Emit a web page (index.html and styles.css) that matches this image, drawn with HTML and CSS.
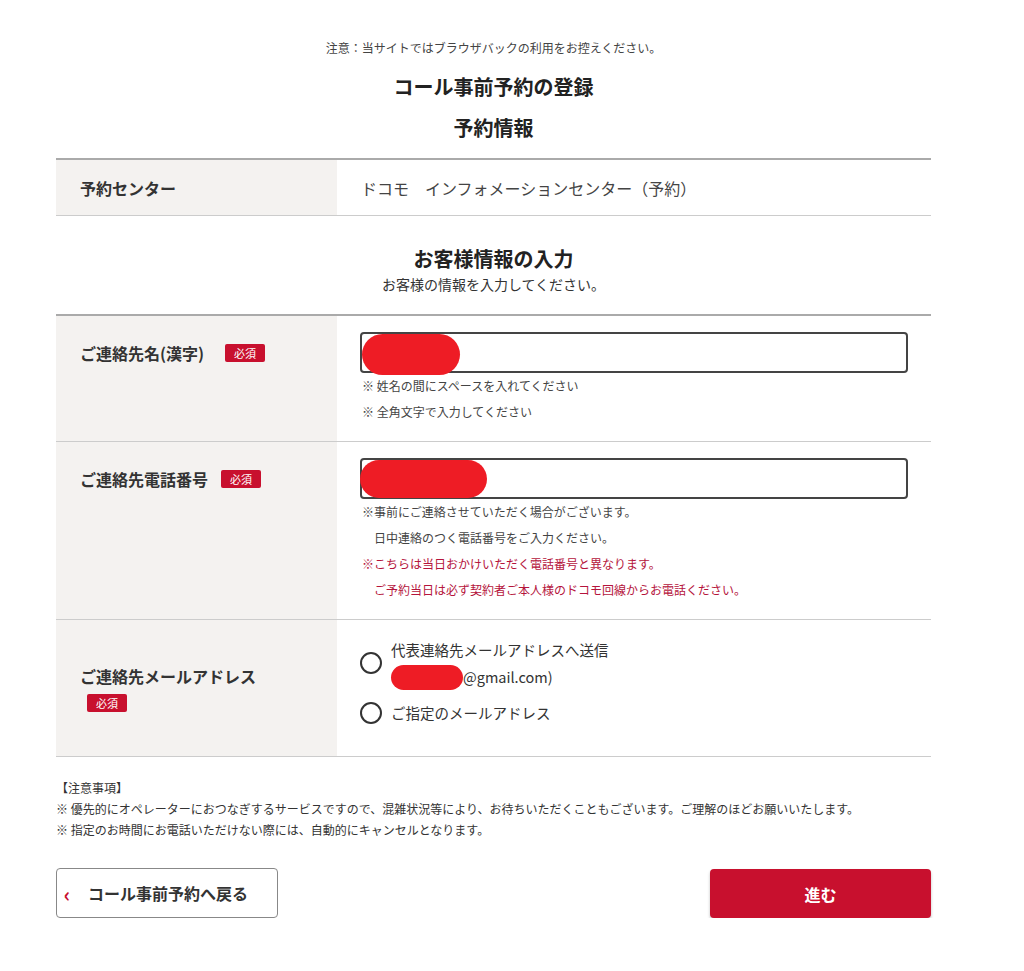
FILE: index.html
```html
<!DOCTYPE html>
<html lang="ja">
<head>
  <meta charset="UTF-8">
  <meta name="viewport" content="width=device-width, initial-scale=1.0">
  <title>コール事前予約の登録</title>
  <link rel="stylesheet" href="styles.css">
</head>
<body>
  <div class="page">
    <p class="notice">注意：当サイトではブラウザバックの利用をお控えください。</p>
    <h1>コール事前予約の登録</h1>
    <h2 class="sub-title">予約情報</h2>

    <div class="table table-info">
      <div class="row row-center">
        <div class="label-cell">予約センター</div>
        <div class="value-cell value-text">ドコモ　インフォメーションセンター（予約）</div>
      </div>
    </div>

    <div class="section-head">
      <h2>お客様情報の入力</h2>
      <p>お客様の情報を入力してください。</p>
    </div>

    <div class="table table-form">
      <div class="row">
        <div class="label-cell">
          <span class="label">ご連絡先名(漢字)</span><span class="badge badge-name">必須</span>
        </div>
        <div class="value-cell">
          <div class="input-wrap">
            <input type="text" class="text-input">
            <span class="mask mask-name"></span>
          </div>
          <p class="note">※ 姓名の間にスペースを入れてください</p>
          <p class="note">※ 全角文字で入力してください</p>
        </div>
      </div>

      <div class="row">
        <div class="label-cell">
          <span class="label">ご連絡先電話番号</span><span class="badge">必須</span>
        </div>
        <div class="value-cell">
          <div class="input-wrap">
            <input type="tel" class="text-input">
            <span class="mask mask-tel"></span>
          </div>
          <p class="note">※事前にご連絡させていただく場合がございます。</p>
          <p class="note">　日中連絡のつく電話番号をご入力ください。</p>
          <p class="note note-red">※こちらは当日おかけいただく電話番号と異なります。</p>
          <p class="note note-red">　ご予約当日は必ず契約者ご本人様のドコモ回線からお電話ください。</p>
        </div>
      </div>

      <div class="row row-center row-mail">
        <div class="label-cell label-stack">
          <span class="label">ご連絡先メールアドレス</span>
          <span class="badge badge-below">必須</span>
        </div>
        <div class="value-cell radios">
          <label class="radio">
            <span class="radio-mark"></span>
            <span class="radio-text">代表連絡先メールアドレスへ送信<br><span class="mask-inline"></span>@gmail.com)</span>
          </label>
          <label class="radio">
            <span class="radio-mark"></span>
            <span class="radio-text">ご指定のメールアドレス</span>
          </label>
        </div>
      </div>
    </div>

    <div class="caution">
      <p>【注意事項】</p>
      <p>※ 優先的にオペレーターにおつなぎするサービスですので、混雑状況等により、お待ちいただくこともございます。ご理解のほどお願いいたします。</p>
      <p>※ 指定のお時間にお電話いただけない際には、自動的にキャンセルとなります。</p>
    </div>

    <div class="actions">
      <button type="button" class="btn-back"><span class="chev">‹</span>コール事前予約へ戻る</button>
      <button type="button" class="btn-next">進む</button>
    </div>
  </div>
</body>
</html>
```

FILE: styles.css
```css
body {
  margin: 0;
  background: #fff;
  color: #333;
  font-family: "Noto Sans CJK JP", "Noto Sans", sans-serif;
}
p {
  margin: 0;
}
.page {
  width: 875px;
  margin-left: 56px;
  padding-top: 38px;
}
.notice {
  text-align: center;
  font-size: 12px;
  line-height: 20px;
  color: #444;
}
h1 {
  text-align: center;
  font-size: 20px;
  line-height: 28px;
  margin: 15px 0 0;
  color: #222;
}
.sub-title {
  text-align: center;
  font-size: 20px;
  line-height: 28px;
  margin: 13px 0 0;
  color: #222;
}
.table {
  border-top: 2px solid #aaa;
}
.table-info {
  margin-top: 16px;
}
.row {
  display: flex;
  border-bottom: 1px solid #ccc;
}
.row-center {
  align-items: stretch;
}
.label-cell {
  width: 257px;
  padding: 25px 0 0 24px;
  background: #f4f2f0;
  font-size: 16px;
  font-weight: bold;
  line-height: 24px;
  display: flex;
  align-items: flex-start;
}
.row-center .label-cell {
  padding-top: 0;
  align-items: center;
}
.table-info .label-cell {
  height: 55px;
}
.value-cell {
  flex: 1;
  padding: 16px 23px 16px 23px;
}
.value-text {
  display: flex;
  align-items: center;
  padding: 0 0 0 24px;
  font-size: 16px;
  color: #444;
}
.section-head {
  text-align: center;
  padding: 29px 0 19px;
}
.section-head h2 {
  margin: 0;
  font-size: 20px;
  line-height: 28px;
  color: #222;
}
.section-head p {
  font-size: 14px;
  line-height: 22px;
  color: #333;
}
.badge {
  display: inline-block;
  margin-left: 13px;
  margin-top: 3px;
  padding: 0 9px;
  height: 18px;
  line-height: 18px;
  font-size: 11px;
  font-weight: normal;
  color: #fff;
  background: #c8102e;
  border-radius: 2px;
}
.badge-name {
  margin-left: 21px;
}
.label-stack {
  flex-direction: column;
  justify-content: center;
  align-items: flex-start !important;
}
.badge-below {
  margin: 6px 0 0 7px;
}
.input-wrap {
  position: relative;
}
.text-input {
  box-sizing: border-box;
  width: 548px;
  height: 41px;
  border: 2px solid #444;
  border-radius: 4px;
  font-size: 15px;
  padding: 0 10px;
  display: block;
}
.mask {
  position: absolute;
  background: #ee1c25;
  border-radius: 30px;
}
.mask-name {
  left: 2px;
  top: 2px;
  width: 98px;
  height: 41px;
}
.mask-tel {
  left: 0;
  top: 2px;
  width: 127px;
  height: 38px;
}
.note {
  font-size: 12px;
  line-height: 26px;
  color: #444;
  margin-left: 2px;
}
.note-red {
  color: #b5143c;
}
.radios {
  display: flex;
  flex-direction: column;
  gap: 9px;
  padding-top: 16px;
  padding-bottom: 30px;
}
.radio {
  display: flex;
  align-items: center;
  gap: 9px;
  font-size: 14.5px;
  line-height: 27px;
  color: #333;
}
.radio-mark {
  box-sizing: border-box;
  width: 22px;
  height: 22px;
  border: 2px solid #333;
  border-radius: 50%;
  flex-shrink: 0;
}
.mask-inline {
  display: inline-block;
  width: 72px;
  height: 25px;
  background: #ee1c25;
  border-radius: 14px;
  vertical-align: middle;
  margin-top: -4px;
}
.caution {
  margin-top: 20px;
  font-size: 12px;
  line-height: 21px;
  color: #333;
}
.actions {
  display: flex;
  justify-content: space-between;
  margin-top: 28px;
}
.btn-back {
  width: 222px;
  height: 50px;
  background: #fff;
  border: 1px solid #888;
  border-radius: 4px;
  font-family: inherit;
  font-size: 16px;
  font-weight: bold;
  color: #333;
  text-align: left;
  padding: 0 0 0 2px;
  display: flex;
  align-items: center;
}
.chev {
  color: #c8102e;
  font-size: 20px;
  width: 16px;
  text-align: center;
  margin-right: 13px;
}
.btn-next {
  width: 221px;
  height: 49px;
  background: #c8102e;
  border: none;
  border-radius: 4px;
  box-shadow: 0 2px 3px rgba(0,0,0,0.25);
  font-family: inherit;
  font-size: 16px;
  font-weight: bold;
  color: #fff;
  margin-top: 1px;
}
```
